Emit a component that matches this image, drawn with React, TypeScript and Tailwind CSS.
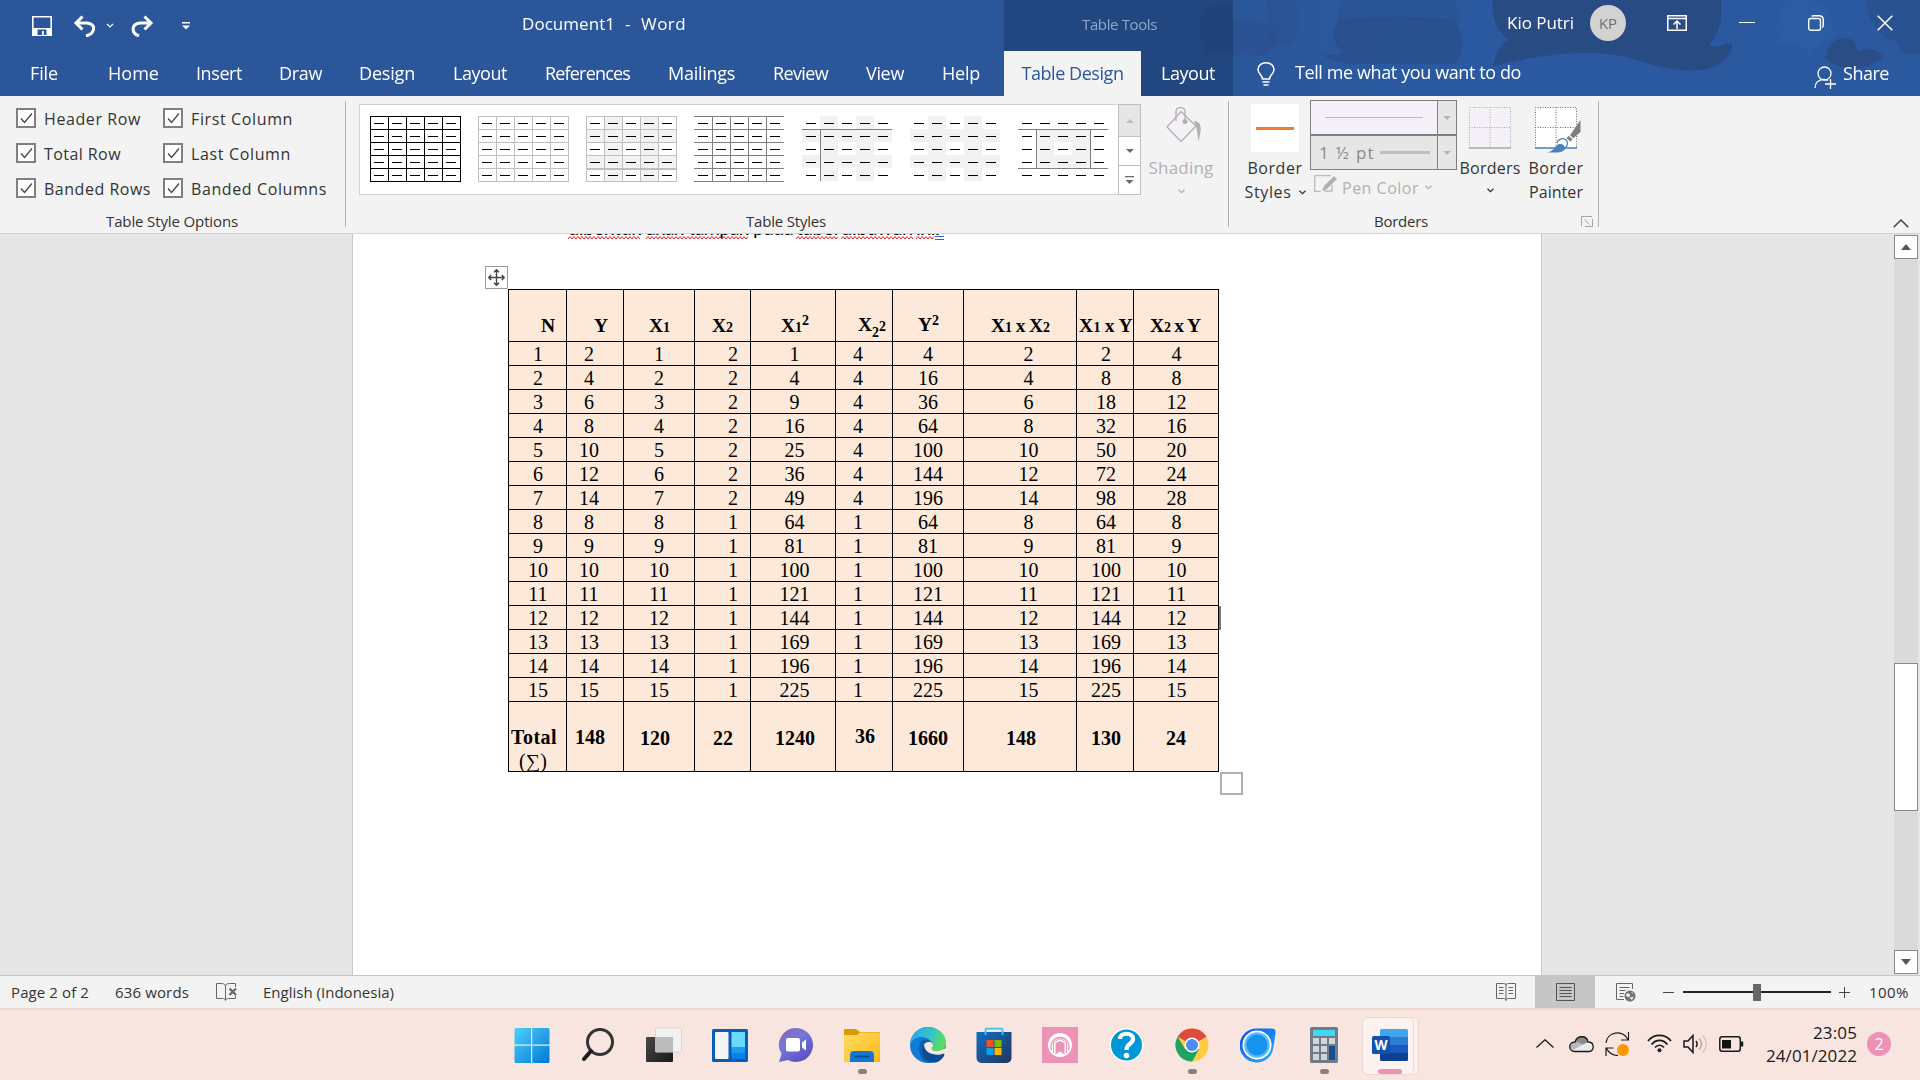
import React, { useLayoutEffect, useRef, useState } from 'react';

type FitProps = { w: number; className?: string; children: React.ReactNode };

/* Text tracked so that its advance equals w pixels. */
function Fit({ w, className = '', children }: FitProps) {
  const ref = useRef<HTMLSpanElement>(null);
  const [ls, setLs] = useState(0);
  useLayoutEffect(() => {
    const el = ref.current;
    if (!el) return;
    const n = (el.textContent || '').length || 1;
    setLs((w - el.getBoundingClientRect().width) / n);
  }, [w]);
  return (
    <span ref={ref} className={'block shrink-0 self-auto whitespace-pre ' + className} style={{ letterSpacing: ls }}>
      {children}
    </span>
  );
}

const tabs = [
  { t: 'File', w: 28, c: 'ml-[30px]' },
  { t: 'Home', w: 51, c: 'ml-[50px]' },
  { t: 'Insert', w: 46, c: 'ml-[37px]' },
  { t: 'Draw', w: 43, c: 'ml-[37px]' },
  { t: 'Design', w: 56, c: 'ml-[37px]' },
  { t: 'Layout', w: 54, c: 'ml-[38px]' },
  { t: 'References', w: 85, c: 'ml-[38px]' },
  { t: 'Mailings', w: 67, c: 'ml-[38px]' },
  { t: 'Review', w: 55, c: 'ml-[38px]' },
  { t: 'View', w: 38, c: 'ml-[38px]' },
  { t: 'Help', w: 38, c: 'ml-[38px]' },
];

function Backdrop() {
  return (
    <svg className="pointer-events-none absolute right-0 top-0 h-24 w-[740px]" viewBox="1180 0 740 96" aria-hidden="true">
      <defs>
        <linearGradient id="fade" x1="0" x2="1">
          <stop offset="0" stopColor="#2a5caa" stopOpacity="0" />
          <stop offset="0.5" stopColor="#2a5caa" stopOpacity="0.5" />
          <stop offset="1" stopColor="#2a5caa" stopOpacity="0.35" />
        </linearGradient>
      </defs>
      <rect x="1180" y="0" width="740" height="96" fill="url(#fade)" />
      <g fill="#2a4a7e" opacity="0.85">
        <path d="M1233 3c-18-4-34 8-34 26 0 10 6 17 2 27 10-3 22-2 32-2z" opacity=".5" />
        <path d="M1233 20c20-4 40 2 43 15s-8 22-22 20-16 2-21 0z" opacity=".3" />
        <path d="M1266 0h28c8 12 8 36-4 44-6 4-14 3-20 0z" opacity=".35" />
        <path d="M1345 20c20-4 100-4 110 2 12 14 8 32 0 42h-100c-14-1-30-4-32-10 12 2 20 1 18-4-14-14-8-28 4-30z" opacity=".6" />
        <path d="M1345 0h110c4 8 6 16 5 24-30-6-90-6-122 2-2-10 2-20 7-26z" opacity=".35" />
        <path d="M1493 0h228v20c-3 14-8 20-12 26 12 2 18-4 22-3 4 4-4 20-20 25-22 6-50 0-78-9-42-12-94-4-140 7 4-16 8-22 16-26-14-10-18-26-16-40z" />
        <path d="M1866 0h54v52c-10 8-20 0-24-10-14-4-30-22-30-42z" opacity=".5" />
        <path d="M1826 58c0-12 8-20 18-20s14 8 14 14c10-6 22-2 26 6-8 6-26 12-36 10s-18-4-22-10z" opacity=".9" />
      </g>
      <path d="M1788 0h24c14 4 26 24 20 40-10-4-18 10-22 16-8-10-16-14-32-10 0-10-6-38 10-46z" fill="#3163ad" opacity=".3" />
    </svg>
  );
}

function TitleArea() {
  return (
    <header className="relative h-24 bg-[#2b579a] text-white">
      <Backdrop />
      <div className="relative flex h-[51px] items-center">
        <svg className="ml-8 h-5 w-5" viewBox="0 0 20 20" fill="none">
          <path d="M.8.8h18.4v18.4H.8z" stroke="#fff" strokeWidth="1.6" />
          <path d="M1 12h18v7H1z" fill="#fff" />
          <path d="M5.5 13.500h9V19h-2.700v-4H10v4H5.500z" fill="#2b579a" />
        </svg>
        <svg className="ml-[21px] h-[22px] w-6" viewBox="0 0 24 22" fill="none" stroke="#fff">
          <path d="M3 8h11c9 1 9 10-1 13" strokeWidth="3" />
          <path d="M9.500 1.500 3 8l6.500 6.500" strokeWidth="3" />
        </svg>
        <svg className="ml-[9px] h-2 w-2" viewBox="0 0 8 8" fill="none" stroke="#fff" strokeWidth="1.2"><path d="M1 2l3 3 3-3" /></svg>
        <svg className="ml-4 h-[22px] w-6" viewBox="0 0 24 22" fill="none" stroke="#fff">
          <path d="M21 8H10C1 9 1 18 9 21" strokeWidth="3" />
          <path d="M14.500 1.500 21 8l-6.500 6.500" strokeWidth="3" />
        </svg>
        <svg className="ml-[28px] h-2 w-2" viewBox="0 0 8 8" fill="#fff"><path d="M0 0h8v1.500H0zM0 3.500h8L4 7.500z" /></svg>
        <div className="ml-[332px] flex pb-[3px] text-[17px] leading-5">
          <Fit w={93}>Document1</Fit>
          <Fit w={7} className="ml-[10px]">-</Fit>
          <Fit w={45} className="ml-[9px]">Word</Fit>
        </div>
        <div className="ml-[318px] flex h-[51px] w-[229px] items-center bg-[#1b3869]/55 pb-[3px] pl-[78px] text-[15px] leading-5 text-[#92a8cb]">
          <Fit w={75}>Table Tools</Fit>
        </div>
        <Fit w={67} className="mb-[5px] ml-[274px] text-[17px] leading-5">Kio Putri</Fit>
        <div className="mb-[5px] ml-4 flex h-9 w-9 items-center justify-center rounded-full bg-[#d2d2d2] text-[15px] text-[#6d6d6d]">
          <Fit w={18} className="leading-5">KP</Fit>
        </div>
        <svg className="mb-[5px] ml-[41px] h-4 w-5" viewBox="0 0 20 16" fill="none" stroke="#fff" strokeWidth="1.500">
          <path d="M.75.75h18.500v14.500H.75zM1 3.500h18M10 14V6M6.500 9.500 10 6l3.500 3.500" />
        </svg>
        <div className="mb-[6px] ml-[52px] h-[1.5px] w-4 bg-white" />
        <svg className="mb-[5px] ml-[53px] h-4 w-4" viewBox="0 0 16 16" fill="none" stroke="#fff" strokeWidth="1.400">
          <rect x=".7" y="3.500" width="11.800" height="11.800" rx="2" />
          <path d="M3.500 1.200C4 .8 5 .7 6 .7h5c3 0 4.300 1.500 4.300 4.300v5c0 1-.2 2-1 2.500" />
        </svg>
        <svg className="mb-[5px] ml-[53px] h-4 w-4" viewBox="0 0 16 16" fill="none" stroke="#fff" strokeWidth="1.500"><path d="M.7.7l14.600 14.600M15.300.7.7 15.300" /></svg>
      </div>
      <nav className="relative flex h-[45px] items-center text-[18px] leading-5">
        {tabs.map((t) => (
          <Fit key={t.t} w={t.w} className={'pb-0.5 ' + t.c}>{t.t}</Fit>
        ))}
        <div className="flex h-[45px] w-[367px] shrink-0 items-center">
          <div className="ml-[24px] flex h-[45px] w-[137px] shrink-0 items-center justify-center bg-[#f3f3f3] pb-0.5 text-[#2b579a]">
            <Fit w={102}>Table Design</Fit>
          </div>
          <div className="flex h-[45px] w-[92px] shrink-0 items-center bg-[#1b3869]/55 pb-0.5 pl-[20px]">
            <Fit w={54}>Layout</Fit>
          </div>
          <svg className="ml-6 h-6 w-[18px] shrink-0" viewBox="0 0 18 24" fill="none" stroke="#fff" strokeWidth="1.500">
            <path d="M5.500 17c0-4-4.500-5-4.500-9.500C1 3.500 4.500.8 9 .8s8 2.700 8 6.700c0 4.500-4.500 5.500-4.500 9.500zM5.500 20h7M6.500 23h5" />
          </svg>
          <Fit w={226} className="ml-5 pb-1">Tell me what you want to do</Fit>
        </div>
        <svg className="ml-[467px] mt-2 h-6 w-[22px] shrink-0" viewBox="0 0 22 24" fill="none" stroke="#fff" strokeWidth="1.300">
          <circle cx="10.500" cy="7.500" r="6.500" />
          <path d="M1 22c0-5 3-8.500 9-8.500 2 0 3 .5 4 1M16.500 13v10M11 18h11" />
        </svg>
        <Fit w={46} className="ml-[7px] pb-0.5">Share</Fit>
      </nav>
    </header>
  );
}

function CheckItem({ label, w }: { label: string; w: number }) {
  return (
    <div className="flex h-[35px] items-start">
      <div className="h-5 w-5 shrink-0 border-2 border-[#808080] bg-white">
        <svg className="h-4 w-4" viewBox="0 0 16 16" fill="none" stroke="#444" strokeWidth="1.300"><path d="M3 8.500l3.500 4L14 3.500" /></svg>
      </div>
      <Fit w={w} className="ml-2 mt-px text-[16px] leading-5">{label}</Fit>
    </div>
  );
}

function StyleThumb({ kind }: { kind: number }) {
  const col = kind === 0 ? '#000' : kind < 3 ? '#bfbfbf' : '#7f7f7f';
  const hs = kind < 4 ? [0, 1, 2, 3, 4, 5] : kind === 4 ? [1] : kind === 5 ? [] : [1, 4];
  const vs = kind < 3 ? [0, 1, 2, 3, 4, 5] : kind === 3 ? [1, 2, 3, 4] : [];
  const cells: React.ReactNode[] = [];
  for (let r = 0; r < 5; r++)
    for (let c = 0; c < 5; c++) {
      const band = r === 1 || r === 3 || c === 1 || c === 3;
      const inner = r > 0 && r < 4 && c > 0 && c < 4;
      const fill = kind === 2 || kind === 4 || kind === 5 ? band : kind === 6 ? inner && band : false;
      if (fill) cells.push(<rect key={r + '-' + c} x={c * 18} y={r * 13} width="18" height="13" fill="#f2f2f2" />);
      cells.push(<rect key={'d' + r + '-' + c} x={c * 18 + 4} y={r * 13 + 7} width="10" height="1" fill="#000" />);
    }
  return (
    <svg className="h-[66px] w-[91px] shrink-0" viewBox="0 0 91 66" shapeRendering="crispEdges">
      {cells}
      {hs.map((y) => <rect key={'h' + y} x="0" y={y * 13} width={kind < 3 ? 91 : 90} height={kind === 2 && y === 4 ? 2 : 1} fill={col} />)}
      {vs.map((x) => <rect key={'v' + x} x={x * 18} y="0" width="1" height="66" fill={col} />)}
      {kind === 4 && <rect x="18" y="13" width="1" height="52" fill={col} />}
      {kind === 6 && <><rect x="18" y="13" width="1" height="39" fill={col} /><rect x="72" y="13" width="1" height="39" fill={col} /></>}
    </svg>
  );
}

function Chev({ className }: { className: string }) {
  return <svg className={'h-[5px] w-[7px] ' + className} viewBox="0 0 7 5" fill="none" stroke="currentColor" strokeWidth="1.300"><path d="M.5.7l3 3 3-3" /></svg>;
}

function Ribbon() {
  return (
    <section className="flex h-[138px] border-b border-[#d2d2d2] bg-[#f3f3f3] text-[#333]">
      <div className="w-[345px] pt-3">
        <div className="grid grid-cols-[147px_1fr] pl-4">
          <CheckItem label="Header Row" w={97} />
          <CheckItem label="First Column" w={102} />
          <CheckItem label="Total Row" w={77} />
          <CheckItem label="Last Column" w={100} />
          <CheckItem label="Banded Rows" w={107} />
          <CheckItem label="Banded Columns" w={136} />
        </div>
        <Fit w={132} className="-mt-0.5 ml-[106px] w-max text-[15px] leading-5">Table Style Options</Fit>
      </div>
      <div className="mt-[5px] h-[126px] w-px bg-[#b1b1b1]" />
      <div className="w-[882px] pt-2">
        <div className="flex h-[91px]">
          <div className="ml-[13px] flex w-[759px] shrink-0 gap-[17px] border border-r-0 border-[#d2d2d2] bg-white pl-[10px] pt-[11px]">
            {[0, 1, 2, 3, 4, 5, 6].map((k) => <StyleThumb key={k} kind={k} />)}
          </div>
          <div className="grid w-[23px] shrink-0 grid-rows-[32px_29px_29px] border border-t-0 border-[#bfbfbf] bg-white">
            <div className="flex items-center justify-center border-t border-[#bfbfbf] bg-[#e6e6e6]"><svg className="h-1 w-2" viewBox="0 0 8 4"><path d="M0 4l4-4 4 4z" fill="#bdbdbd" /></svg></div>
            <div className="flex items-center justify-center border-t border-[#bfbfbf]"><svg className="h-1 w-2" viewBox="0 0 8 4"><path d="M0 0l4 4 4-4z" fill="#6a6a6a" /></svg></div>
            <div className="flex items-center justify-center border-t border-[#bfbfbf]"><svg className="h-2 w-[9px]" viewBox="0 0 9 8"><path d="M0 0h9v1.300H0zM.5 4l4 4 4-4z" fill="#6a6a6a" /></svg></div>
          </div>
          <div className="flex w-[80px] flex-col items-center text-[#b1b1b1]">
            <svg className="ml-[5px] mt-[2px] h-[38px] w-[38px]" viewBox="0 0 38 38" fill="none" stroke="#b1b1b1" strokeWidth="1.300">
              <path d="M16 5.500 31 20 16 35.500 2 21z" fill="#f6f0f8" />
              <path d="M11 15V5.500C11 1 19 0 20 5v11" />
              <circle cx="20" cy="15.500" r="2.500" fill="#b1b1b1" stroke="none" />
              <path d="M29 15c7 0 9 7 4 21 0-8-1-14-4-21z" fill="#b1b1b1" stroke="none" />
            </svg>
            <Fit w={65} className="mt-[14px] text-[17px] leading-5">Shading</Fit>
            <Chev className="mt-[11px]" />
          </div>
        </div>
        <Fit w={80} className="ml-[400px] mt-4 w-max text-[15px] leading-5">Table Styles</Fit>
      </div>
      <div className="mt-[5px] h-[126px] w-px bg-[#b1b1b1]" />
      <div className="w-[369px]">
        <div className="flex h-[115px]">
          <div className="ml-[16px] mt-2 flex w-[60px] flex-col items-center text-[16px] leading-6">
            <div className="-ml-px flex h-12 w-12 items-center justify-center bg-white"><div className="h-[3px] w-[38px] bg-[#ed7d31]" /></div>
            <Fit w={55} className="mt-[4px]">Border</Fit>
            <div className="flex items-center"><Fit w={47}>Styles</Fit><Chev className="ml-[7px]" /></div>
          </div>
          <div className="ml-[5px] mt-1 w-[147px] text-[#8a8a8a]">
            <div className="flex h-[35px] border border-[#7f7f7f] bg-[#f6f0f8]">
              <div className="flex w-[127px] items-center justify-center border-r border-[#7f7f7f]"><div className="h-px w-[98px] bg-[#b9b9b9]" /></div>
              <div className="flex grow items-center justify-center bg-[#e6e6e6]"><svg className="h-1 w-2" viewBox="0 0 8 4"><path d="M0 0l4 4 4-4z" fill="#b5b5b5" /></svg></div>
            </div>
            <div className="flex h-[35px] border border-[#7f7f7f] bg-[#e6e6e6]">
              <div className="flex w-[127px] items-center border-r border-[#7f7f7f] pl-[8px]">
                <Fit w={56} className="text-[17px]">1 ½ pt</Fit>
                <div className="ml-[5px] h-[3px] w-[50px] bg-[#bfbfbf]" />
              </div>
              <div className="flex grow items-center justify-center"><svg className="h-1 w-2" viewBox="0 0 8 4"><path d="M0 0l4 4 4-4z" fill="#b5b5b5" /></svg></div>
            </div>
            <div className="flex pt-[5px] text-[#b1b1b1]">
              <svg className="ml-[4px] h-[18px] w-6" viewBox="0 0 24 18" fill="none" stroke="#b1b1b1" strokeWidth="1.300">
                <path d="M17 .7H.7v15.600h6M18 10v6h-8" stroke="#bbb" />
                <path d="M8 16l2-5L20 1l3 3-10 10z" fill="#b1b1b1" stroke="none" />
              </svg>
              <Fit w={77} className="ml-[4px] mt-px text-[16px] leading-6">Pen Color</Fit>
              <Chev className="ml-[6px] mt-[10px]" />
            </div>
          </div>
          <div className="ml-[2px] flex w-[62px] flex-col items-center text-[16px] leading-6">
            <svg className="mt-[11px] h-[42px] w-[42px]" viewBox="0 0 42 42" fill="none">
              <path d="M.5.5h41v40H.5z" fill="#f6f0f8" />
              <path d="M.5 41V.5h41V41M21 0v41M0 20.500h42" stroke="#a9a9a9" strokeDasharray="1 1.500" />
              <path d="M0 41h42" stroke="#a9a9a9" strokeWidth="1.300" />
            </svg>
            <Fit w={61} className="mt-[7px]">Borders</Fit>
            <Chev className="mt-[8px]" />
          </div>
          <div className="ml-[4px] flex w-[62px] flex-col items-center text-[16px] leading-6">
            <svg className="ml-[3px] mt-[11px] h-[46px] w-[46px]" viewBox="0 0 46 46" fill="none">
              <path d="M.5.5h41v40H.5z" fill="#fff" />
              <path d="M.5 41V.5h41V41M21 0v41M0 20.500h42" stroke="#6a6a6a" strokeDasharray="1 1.500" />
              <path d="M0 41h42" stroke="#4a82bd" strokeWidth="1.500" />
              <path d="M45.500 13v12l-8 7-3-3z" fill="#7f7f7f" />
              <path d="M34 28l4.500 4.500-3 3-5-4.500z" fill="#7f7f7f" stroke="#fff" strokeWidth="1.200" />
              <path d="M22 36c1-5 8-5.500 10-2 1.500 4-1 7.500-5 9" fill="#fff" stroke="#4a82bd" strokeWidth="1.300" />
              <path d="M12 45.500c7-1 7-6 11-8 4-1.500 7 1 7 3.500 0 3-4 4.500-9 4.500z" fill="#4a82bd" />
            </svg>
            <Fit w={55} className="mt-[3px]">Border</Fit>
            <Fit w={54}>Painter</Fit>
          </div>
        </div>
        <div className="flex">
          <Fit w={54} className="ml-[145px] text-[15px] leading-5">Borders</Fit>
          <svg className="ml-[153px] mt-[5px] h-[11px] w-3" viewBox="0 0 12 11" fill="none" stroke="#a5a5a5"><path d="M.5 10V.5H11M3.500 3.500l5 5M4 10.500h7.500V3M11.500 5.500v5h-5" /></svg>
        </div>
      </div>
      <div className="mt-[5px] h-[126px] w-px bg-[#b1b1b1]" />
      <svg className="ml-[294px] mt-[123px] h-[9px] w-4" viewBox="0 0 16 9" fill="none" stroke="#444" strokeWidth="1.500"><path d="M.7 8.300 8 1l7.300 7.300" /></svg>
    </section>
  );
}

const rows: string[][] = [
  ['1', '2', '1', '2', '1', '4', '4', '2', '2', '4'],
  ['2', '4', '2', '2', '4', '4', '16', '4', '8', '8'],
  ['3', '6', '3', '2', '9', '4', '36', '6', '18', '12'],
  ['4', '8', '4', '2', '16', '4', '64', '8', '32', '16'],
  ['5', '10', '5', '2', '25', '4', '100', '10', '50', '20'],
  ['6', '12', '6', '2', '36', '4', '144', '12', '72', '24'],
  ['7', '14', '7', '2', '49', '4', '196', '14', '98', '28'],
  ['8', '8', '8', '1', '64', '1', '64', '8', '64', '8'],
  ['9', '9', '9', '1', '81', '1', '81', '9', '81', '9'],
  ['10', '10', '10', '1', '100', '1', '100', '10', '100', '10'],
  ['11', '11', '11', '1', '121', '1', '121', '11', '121', '11'],
  ['12', '12', '12', '1', '144', '1', '144', '12', '144', '12'],
  ['13', '13', '13', '1', '169', '1', '169', '13', '169', '13'],
  ['14', '14', '14', '1', '196', '1', '196', '14', '196', '14'],
  ['15', '15', '15', '1', '225', '1', '225', '15', '225', '15'],
];
const cellPad = ['pl-px', 'pr-3', '', 'pl-[21px]', 'pl-[3px]', 'pr-3', '', 'pl-[17px]', 'pl-[2px]', 'pl-px'];

const S = ({ children, className = '' }: { children: React.ReactNode; className?: string }) => (
  <span className={'inline-block text-[14px] leading-none ' + className}>{children}</span>
);
const Gap = () => <span className="text-[14px]"> </span>;

const heads: { w: number; p: string; n: React.ReactNode }[] = [
  { w: 13.5, p: 'pl-[32px]', n: 'N' },
  { w: 13.5, p: 'pl-[27px]', n: 'Y' },
  { w: 21, p: 'pl-[25px]', n: <>X<S>1</S></> },
  { w: 21, p: 'pl-[17px]', n: <>X<S>2</S></> },
  { w: 28, p: 'pl-[30px]', n: <>X<S>1</S><S className="-translate-y-[7px]">2</S></> },
  { w: 28, p: 'pl-[22px] -mt-px', n: <>X<S className="translate-y-[6px]">2</S><S>2</S></> },
  { w: 21, p: 'pl-[25px] -mt-px', n: <>Y<S className="-translate-y-[6px]">2</S></> },
  { w: 59, p: 'pl-[27px]', n: <>X<S>1</S><Gap />x<Gap />X<S>2</S></> },
  { w: 54, p: 'pl-[2px]', n: <>X<S>1</S><Gap />x<Gap />Y</> },
  { w: 51, p: 'pl-[16px]', n: <>X<S>2</S><Gap />x<Gap />Y</> },
];

const totals: { t: string; p: string }[] = [
  { t: '148', p: 'pl-[8px] pt-[25px]' },
  { t: '120', p: 'pl-[16px] pt-[26px]' },
  { t: '22', p: 'pl-[18px] pt-[26px]' },
  { t: '1240', p: 'pl-[24px] pt-[26px]' },
  { t: '36', p: 'pl-[19px] pt-[24px]' },
  { t: '1660', p: 'pl-[15px] pt-[26px]' },
  { t: '148', p: 'pl-[42px] pt-[26px]' },
  { t: '130', p: 'pl-[14px] pt-[26px]' },
  { t: '24', p: 'pl-[32px] pt-[26px]' },
];

const words = [
  { t: 'dibentuk', w: 73, c: '' },
  { t: 'akan tampak', w: 102, c: 'ml-[5px]' },
  { t: 'pada', w: 40, c: 'ml-[5px]', ok: true },
  { t: 'tabel', w: 42, c: 'ml-[3px]' },
  { t: 'dibawah', w: 72, c: 'ml-[3px]' },
  { t: 'ini', w: 19, c: 'ml-[3px]' },
];

function Squiggle({ w }: { w: number }) {
  let d = 'M0 3';
  for (let x = 2, up = true; x <= w; x += 2, up = !up) d += `L${x} ${up ? 0.5 : 3}`;
  return <svg className="absolute left-0 top-5 h-1 w-full overflow-hidden" fill="none" stroke="#e8202a" strokeWidth="1"><path d={d} /></svg>;
}

function Grid() {
  return (
    <div className="w-[711px] border-l border-t border-black bg-[#fde9d9] font-['Liberation_Serif',serif] text-black">
      <div className="grid h-[52px] grid-cols-[58px_57px_71px_56px_85px_57px_71px_113px_57px_85px] text-[19.5px] font-bold leading-5">
        {heads.map((h, i) => (
          <div key={i} className="flex border-b border-r border-black pt-[26px]">
            <div className={h.p}><Fit w={h.w}>{h.n}</Fit></div>
          </div>
        ))}
      </div>
      {rows.map((r, i) => (
        <div key={i} className="grid h-6 grid-cols-[58px_57px_71px_56px_85px_57px_71px_113px_57px_85px] text-[20px] leading-[25px]">
          {r.map((c, j) => (
            <div key={j} className={'flex h-6 justify-center border-b border-r border-black ' + cellPad[j]}>{c}</div>
          ))}
        </div>
      ))}
      <div className="grid h-[70px] grid-cols-[58px_57px_71px_56px_85px_57px_71px_113px_57px_85px] text-[20px] font-bold leading-5">
        <div className="h-[70px] border-b border-r border-black pl-[2px] pt-[23px] leading-6">
          <Fit w={46} className="w-max">Total</Fit>
          <Fit w={28} className="ml-[8px] w-max font-normal">(∑)</Fit>
        </div>
        {totals.map((t, i) => (
          <div key={i} className={'border-b border-r border-black ' + t.p}>{t.t}</div>
        ))}
      </div>
    </div>
  );
}

function DocumentArea() {
  return (
    <main className="flex h-[741px] bg-[#e6e6e6]">
      <div className="ml-[352px] w-[1190px] shrink-0 overflow-hidden border-x border-[#c6c6c6] bg-white">
        <div className="-mt-[18px] ml-[215px] flex h-6 font-['Lato',sans-serif] text-[20px] leading-[23px] text-black">
          {words.map((x) => (
            <div key={x.t} className={'relative ' + x.c}>
              <Fit w={x.w}>{x.t}</Fit>
              {!x.ok && <Squiggle w={x.w} />}
            </div>
          ))}
          <div className="relative w-2">:<div className="absolute left-0 top-5 h-1 w-[9px] border-y border-[#2b62d9]" /></div>
        </div>
        <div className="ml-[132px] mt-[26px] flex h-[23px] w-[23px] items-center justify-center border-[1.5px] border-[#9a9a9a] bg-white">
          <svg className="h-[17px] w-[17px]" viewBox="0 0 17 17" fill="none" stroke="#444" strokeWidth="1.400">
            <path d="M8.500 1v15M1 8.500h15M6 3.200 8.500.7 11 3.200M6 13.800l2.500 2.500 2.500-2.500M3.200 6 .7 8.500 3.200 11M13.800 6l2.500 2.500-2.500 2.500" />
          </svg>
        </div>
        <div className="ml-[155px] flex w-max items-end">
          <Grid />
          <div className="mb-[142px] h-6 w-[2px] bg-[#777]" />
        </div>
        <div className="ml-[867px] h-[23px] w-[23px] border-2 border-[#b0b0b0] bg-white" />
      </div>
      <div className="ml-[352px] flex w-6 flex-col pt-[1px]">
        <div className="flex h-6 items-center justify-center border border-[#8a8a8a] bg-white"><svg className="h-[6px] w-[10px]" viewBox="0 0 10 6"><path d="M0 6l5-6 5 6z" fill="#555" /></svg></div>
        <div className="h-[404px] bg-[#dadada]" />
        <div className="h-[148px] border border-[#8a8a8a] bg-white" />
        <div className="h-[139px] bg-[#dadada]" />
        <div className="flex h-6 items-center justify-center border border-[#8a8a8a] bg-white"><svg className="h-[6px] w-[10px]" viewBox="0 0 10 6"><path d="M0 0l5 6 5-6z" fill="#555" /></svg></div>
      </div>
    </main>
  );
}

function StatusBar() {
  return (
    <div className="flex h-[33px] items-center border-t border-[#c6c6c6] bg-[#f3f3f3] text-[15px] leading-5 text-[#333]">
      <Fit w={78} className="ml-[11px]">Page 2 of 2</Fit>
      <Fit w={74} className="ml-[26px]">636 words</Fit>
      <svg className="mb-[1px] ml-[27px] h-[18px] w-[22px]" viewBox="0 0 22 18" fill="none" stroke="#666">
        <path d="M9.500 16.500V3C9 1 7 .5 5 .5H.5v15h6c2 0 3 1 3 2 0-1 1-2 3-2h7V13M9.500 3c.5-2 2-2.500 4-2.500h6V4" />
        <path d="M13.500 5.500l6.500 6.500m0-6.500L13.500 12" strokeWidth="2.200" />
      </svg>
      <Fit w={131} className="ml-[25px]">English (Indonesia)</Fit>
      <svg className="ml-[1102px] h-[18px] w-5 shrink-0" viewBox="0 0 20 18" fill="none" stroke="#666">
        <path d="M10 1v17M.5.500h7c1.500 0 2.500.5 2.500 1.500 0-1 1-1.500 2.500-1.500h7v15h-7c-1.500 0-2.500.5-2.500 1.500 0-1-1-1.500-2.500-1.500h-7zM3 4.500h4.500M3 7.500h4.500M3 10.500h4.500M12.500 4.500H17M12.500 7.500H17M12.500 10.500H17" />
      </svg>
      <div className="ml-[19px] flex h-8 w-[60px] shrink-0 items-center justify-center bg-[#c6c6c6]">
        <svg className="h-[18px] w-[19px]" viewBox="0 0 19 18" fill="none" stroke="#555"><path d="M.5.500h18v17H.5zM3.500 4.500h12M3.500 7.500h12M3.500 10.500h12M3.500 13.500h12" /></svg>
      </div>
      <svg className="ml-[21px] h-[19px] w-5 shrink-0" viewBox="0 0 20 19" fill="none" stroke="#666">
        <path d="M8 16.500H.5V.5h16V6M3.500 4.500h10M3.500 7.500h6M3.500 10.500H8M3.500 13.500h4" />
        <circle cx="14" cy="13" r="5.500" fill="#707070" stroke="none" />
        <path d="M11 10.500l3 1-1 2.500-2.500-1zM15.500 9l2 2M14 15l3-1-1 2.500z" stroke="#eee" strokeWidth=".8" fill="#eee" />
      </svg>
      <div className="ml-[27px] h-px w-[11px] bg-[#444]" />
      <div className="ml-[9px] h-[2px] w-[70px] bg-[#262626]" />
      <div className="h-[17px] w-2 bg-[#666]" />
      <div className="h-[2px] w-[70px] bg-[#262626]" />
      <svg className="ml-[8px] h-[11px] w-[11px] shrink-0" viewBox="0 0 11 11" stroke="#444"><path d="M5.500 0v11M0 5.500h11" /></svg>
      <Fit w={40} className="ml-[19px]">100%</Fit>
    </div>
  );
}

const icons: { n: string; dot?: boolean; s: React.ReactNode }[] = [
  { n: 'start', s: <>
    <linearGradient id="w" x1="0" y1="0" x2="1" y2="1"><stop stopColor="#4fd0fb" /><stop offset="1" stopColor="#0078d4" /></linearGradient>
    <path d="M2 1H17V17.500H.5V2.500A1.500 1.500 0 012 1zM18.200 1H34a1.500 1.500 0 011.500 1.500v15H18.200zM.5 18.700H17V36H2a1.500 1.500 0 01-1.500-1.500zM18.200 18.700h17.300v15.800A1.500 1.500 0 0134 36H18.200z" fill="url(#w)" /></> },
  { n: 'search', s: <>
    <circle cx="20" cy="15" r="12.500" fill="none" stroke="#333" strokeWidth="3" /><path d="M11 24 4 32" stroke="#1e1e1e" strokeWidth="4" strokeLinecap="round" /></> },
  { n: 'taskview', s: <>
    <linearGradient id="tv" x1="0" y1="0" x2="1" y2="1"><stop stopColor="#4a4a4a" /><stop offset="1" stopColor="#181818" /></linearGradient>
    <rect y="10" width="27" height="25" rx="1" fill="url(#tv)" /><rect x="9.500" y="1" width="26" height="24" rx="1" fill="#f2f2f2" stroke="#d8d4d3" /><rect x="9" y="10" width="18" height="15" fill="#bcbcbc" /></> },
  { n: 'widgets', s: <>
    <rect y="2" width="36" height="33" rx="1.500" fill="#0a5db5" /><rect x="3" y="5" width="13.500" height="27" rx="1" fill="#f5f5f5" /><path d="M19.500 5H33v15H19.500z" fill="#69d9ff" /><path d="M19.500 20H33v6H19.500z" fill="#1d9bf0" /><path d="M19.500 26H33v6H19.500z" fill="#0a7fe8" /></> },
  { n: 'chat', s: <>
    <linearGradient id="ch" x1="0" y1="0" x2=".7" y2="1"><stop stopColor="#8c64b4" /><stop offset=".45" stopColor="#7479d8" /><stop offset="1" stopColor="#5a4fc0" /></linearGradient>
    <path d="M18 1a17 17 0 11-8 32L1 35l2.500-8A17 17 0 0118 1z" fill="url(#ch)" /><rect x="8" y="11" width="14" height="13.500" rx="2" fill="#fff" /><path d="M24 15.500l4-3v11l-4-3z" fill="#fff" /></> },
  { n: 'explorer', dot: true, s: <>
    <linearGradient id="ex" x1="0" y1="0" x2="1" y2="1"><stop stopColor="#ffdc68" /><stop offset="1" stopColor="#fbb912" /></linearGradient>
    <path d="M0 3A1 1 0 011 2h11l4 3h19a1 1 0 011 1v6H0z" fill="#d99a05" /><path d="M0 8h13l3-2.500h20V35H0z" fill="url(#ex)" /><path d="M6 35v-7a4 4 0 014-4h16a4 4 0 014 4v7z" fill="#1277d0" /><path d="M11 29.500h14" stroke="#0a4f93" strokeWidth="1.800" strokeLinecap="round" /></> },
  { n: 'edge', s: <>
    <linearGradient id="e1" x1="0" y1=".3" x2="1" y2=".6"><stop stopColor="#2ba7ee" /><stop offset=".55" stopColor="#35c6c8" /><stop offset="1" stopColor="#5fe04e" /></linearGradient>
    <circle cx="18" cy="18" r="18" fill="#0f7fd6" />
    <path d="M0 18C0 8 8 0 18 0s18 7.500 18 15c0 6-4 9-9 9-4 0-6-1.500-5-3.500 1-1.500 1-2.500.5-4C21 12 15 9.500 10 10 5 10.500 1 14 0 18z" fill="url(#e1)" />
    <path d="M10 16c1-4 8-5 11 0-4-2-8 1-7 6-1 6 3 12 9 13.300C12 37 7 27 10 16z" fill="#0d5fae" />
    <path d="M14 18c1-3 6-4 8.500-1.500.8 1.500.5 3-.5 4.500-.7 2 1 3 5 3.200l9.500-3c0 3-1 5-2 6-8 2.500-20 1-20.500-9.200z" fill="#f8e6e0" />
    <path d="M22 20.500c-1 2 1 3.500 5 3.500 5 0 9-3 9-9v-2c-2 5-8 9-14 7.500z" fill="#5bdc5b" />
    <path d="M14 18c0 8 12 12 19.500 8.500 1 0 1 1 .5 2.500-3 5-7 7-11 6.600C12 33 10 24 14 18z" fill="#0c4c94" /></> },
  { n: 'store', s: <>
    <linearGradient id="st" x1="0" y1="0" x2="1" y2="1"><stop stopColor="#0f6fc6" /><stop offset="1" stopColor="#22365c" /></linearGradient>
    <path d="M.5 5h35v26a5 5 0 01-5 5h-25a5 5 0 01-5-5z" fill="url(#st)" /><path d="M9.500 8V2.500A.8.8 0 0110.300 1.700h15.400a.8.8 0 01.8.8V8" fill="none" stroke="#3cc5f2" strokeWidth="1.800" />
    <path d="M10.500 13h7v7h-7z" fill="#f25022" /><path d="M18.500 13h7v7h-7z" fill="#7fba00" /><path d="M10.500 21h7v7h-7z" fill="#00a4ef" /><path d="M18.500 21h7v7h-7z" fill="#ffb900" /></> },
  { n: 'pinkapp', s: <>
    <path d="M0 0h36v36H0z" fill="#ec92b5" /><circle cx="18" cy="18" r="12" fill="#fff" />
    <path d="M9.500 23c-2-6 2-12.500 8.500-12.500S28.500 17 26.500 23" fill="none" stroke="#ec92b5" strokeWidth="1.300" />
    <path d="M18 14l-4.500 2v11.500l4.500-3 4.500 3V16z" fill="#ec92b5" /><path d="M11.500 26V15L18 11.500l6.500 3.500V26" fill="none" stroke="#ec92b5" strokeWidth="1" /></> },
  { n: 'help', s: <>
    <circle cx="18.500" cy="18" r="17" fill="#fff" /><circle cx="18.500" cy="18" r="15.500" fill="#0097d8" /><path d="M12 12c0-7 13-7 13 0 0 5-6.500 4.500-6.500 11" fill="none" stroke="#fff" strokeWidth="4.200" /><circle cx="18.500" cy="28.500" r="2.800" fill="#fff" /></> },
  { n: 'chrome', dot: true, s: <>
    <circle cx="18" cy="18" r="16.500" fill="#ffcd40" /><path d="M18 18 3.700 9.700A16.500 16.500 0 0118 1.500a16.500 16.500 0 0114.300 8.300z" fill="#dd4b3e" /><path d="M18 10h14.500L31 8 18 1.500z" fill="#dd4b3e" /><path d="M18 34.500A16.500 16.500 0 013.700 9.700L11 22l14 0z" fill="#1da362" /><path d="M18 34.500 25 22l-4 0-8 0-1 8z" fill="#1da362" /><circle cx="18" cy="18" r="7.500" fill="#fff" /><circle cx="18" cy="18" r="6" fill="#4c8bf5" /></> },
  { n: 'ring', s: <>
    <linearGradient id="rg" x1="0" y1="0" x2="1" y2="1"><stop stopColor="#0a4df0" /><stop offset="1" stopColor="#22b5f5" /></linearGradient>
    <path d="M17 1.500h15c3 0 4 2 3.500 5L33.500 20A17 17 0 1117 1.500z" fill="url(#rg)" /><circle cx="17" cy="18" r="14.500" fill="#fff" /><circle cx="17" cy="18" r="12.800" fill="#5bbcf8" /><circle cx="17" cy="18" r="10.500" fill="#1793ee" /></> },
  { n: 'calculator', dot: true, s: <>
    <path d="M5.500 0h25a1.500 1.500 0 011.500 1.500v33a1.500 1.500 0 01-1.500 1.500h-25A1.500 1.500 0 014 34.500v-33A1.500 1.500 0 015.500 0z" fill="#737c84" /><path d="M7 3h22v6H7z" fill="#3fd8f7" />
    <path d="M7 11h6v6H7zM15 11h6v6h-6zM23 11h6v6h-6zM7 19h6v6H7zM15 19h6v6h-6zM7 27h6v6H7zM15 27h6v6h-6z" fill="#ced5dc" /><path d="M23 19h6v14h-6z" fill="#15518f" /></> },
];

function Taskbar() {
  return (
    <footer className="flex h-[72px] bg-[#f8e5df] text-[#1a1a1a] shadow-[inset_0_2px_0_#ecd6d0]">
      <div className="ml-[499px] flex">
        {icons.map((i) => (
          <div key={i.n} className="flex w-[66px] flex-col items-center pt-[19px]">
            <svg className="h-9 w-9" viewBox="0 0 36 36">{i.s}</svg>
            {i.dot && <div className="mt-[6px] h-[5px] w-[9px] rounded-full bg-[#8b7f7d]" />}
          </div>
        ))}
        <div className="ml-[5px] mt-[9px] h-[58px] w-[57px] rounded-md border border-[#ecd8d2] bg-[#fbf0ec]">
          <div className="flex h-[56px] w-[51px] flex-col items-center rounded-md border-r border-[#ecd8d2] bg-[#fcf3f0] pl-[3px] pt-[11px]">
            <svg className="h-[33px] w-9" viewBox="0 0 36 33">
              <path d="M8 1.500A1.500 1.500 0 019.500 0h25A1.500 1.500 0 0136 1.500V8H8z" fill="#41a5ee" /><path d="M8 8h28v8H8z" fill="#2b7cd3" /><path d="M8 16h28v8H8z" fill="#185abd" /><path d="M8 24h28v6.500a1.500 1.500 0 01-1.500 1.500h-25A1.500 1.500 0 018 30.500z" fill="#103f91" />
              <rect y="7" width="18" height="18" rx="1.500" fill="#1550b0" />
              <text x="9" y="21" textAnchor="middle" fontFamily="Open Sans, sans-serif" fontWeight="700" fontSize="13.500" fill="#fff">W</text>
            </svg>
            <div className="mt-[7px] h-[5px] w-6 rounded-full bg-[#ec92b5]" />
          </div>
        </div>
      </div>
      <svg className="ml-[117px] mt-[31px] h-[9px] w-[18px]" viewBox="0 0 18 9" fill="none" stroke="#1a1a1a" strokeWidth="1.300"><path d="M.5 8.500 9 .8l8.500 7.700" /></svg>
      <svg className="ml-[15px] mt-[27px] h-[18px] w-[25px]" viewBox="0 0 25 18">
        <path d="M6 16.500c-7 0-7-9.500 0-9.500C8 0 18 0 19 7c7 0 6.500 9.500 1 9.500z" fill="#ececec" />
        <path d="M6 7c2-7 12-7 13 0l-5 2.500L6 7z" fill="#8b8b8b" /><path d="M5 7c3-.5 6 1 9 2.500L4 15C-1 13 0 7.500 5 7z" fill="#b9b9b9" />
        <path d="M6 16.500c-7 0-7-9.500 0-9.500C8 0 18 0 19 7c7 0 6.500 9.500 1 9.500z" fill="none" stroke="#1a1a1a" strokeWidth="1.300" />
      </svg>
      <svg className="ml-[11px] mt-[24px] h-6 w-[25px]" viewBox="0 0 25 24" fill="none" stroke="#1a1a1a" strokeWidth="1.200">
        <path d="M1 11C2 0 17-3 23 7.500M23.500 0v8H16M1 24v-8h7.500M1.500 16.500C4 21 8 23.500 13 23.500" /><circle cx="18" cy="18" r="6" fill="#ff9800" stroke="none" />
      </svg>
      <svg className="ml-[17px] mt-[26px] h-[19px] w-[25px]" viewBox="0 0 25 19" fill="none" stroke="#1a1a1a" strokeWidth="1.700">
        <path d="M1 7C7-.5 18-.5 24 7" /><path d="M4.500 10.500c4.500-5.500 11.500-5.500 16 0" /><path d="M8 13.500c2.500-3 6.500-3 9 0" /><circle cx="12.500" cy="16.300" r="2" fill="#1a1a1a" stroke="none" />
      </svg>
      <svg className="ml-[11px] mt-[26px] h-5 w-[25px]" viewBox="0 0 25 20" fill="none" stroke="#1a1a1a" strokeWidth="1.500">
        <path d="M1 7h4l5-5.500v17L5 13H1z" /><path d="M13 7c1.500 2 1.500 4 0 6" /><path d="M16 4.500c3.500 3.500 3.500 7.500 0 11" stroke="#b9a8a4" /><path d="M19.500 1.500c5 5 5 12 0 17" stroke="#d9c8c3" />
      </svg>
      <svg className="ml-[11px] mt-[28px] h-4 w-[25px]" viewBox="0 0 25 16" fill="none" stroke="#1a1a1a" strokeWidth="1.500">
        <rect x=".8" y=".8" width="20.500" height="14.400" rx="2.500" /><rect x="3" y="4" width="9" height="8.500" fill="#111" stroke="none" /><path d="M23 5.500v5" strokeWidth="2.500" />
      </svg>
      <div className="ml-[22px] flex w-[91px] flex-col items-end pt-[13px] text-[17px] leading-[23px]">
        <Fit w={44}>23:05</Fit>
        <Fit w={91}>24/01/2022</Fit>
      </div>
      <div className="ml-[10px] mt-6 flex h-6 w-6 items-center justify-center rounded-full bg-[#ec92b5] text-[16px] text-white">2</div>
    </footer>
  );
}

export default function App() {
  return (
    <div className="h-[1080px] w-[1920px] overflow-hidden font-['Open_Sans','Noto_Sans',sans-serif]">
      <TitleArea />
      <Ribbon />
      <DocumentArea />
      <StatusBar />
      <Taskbar />
    </div>
  );
}
